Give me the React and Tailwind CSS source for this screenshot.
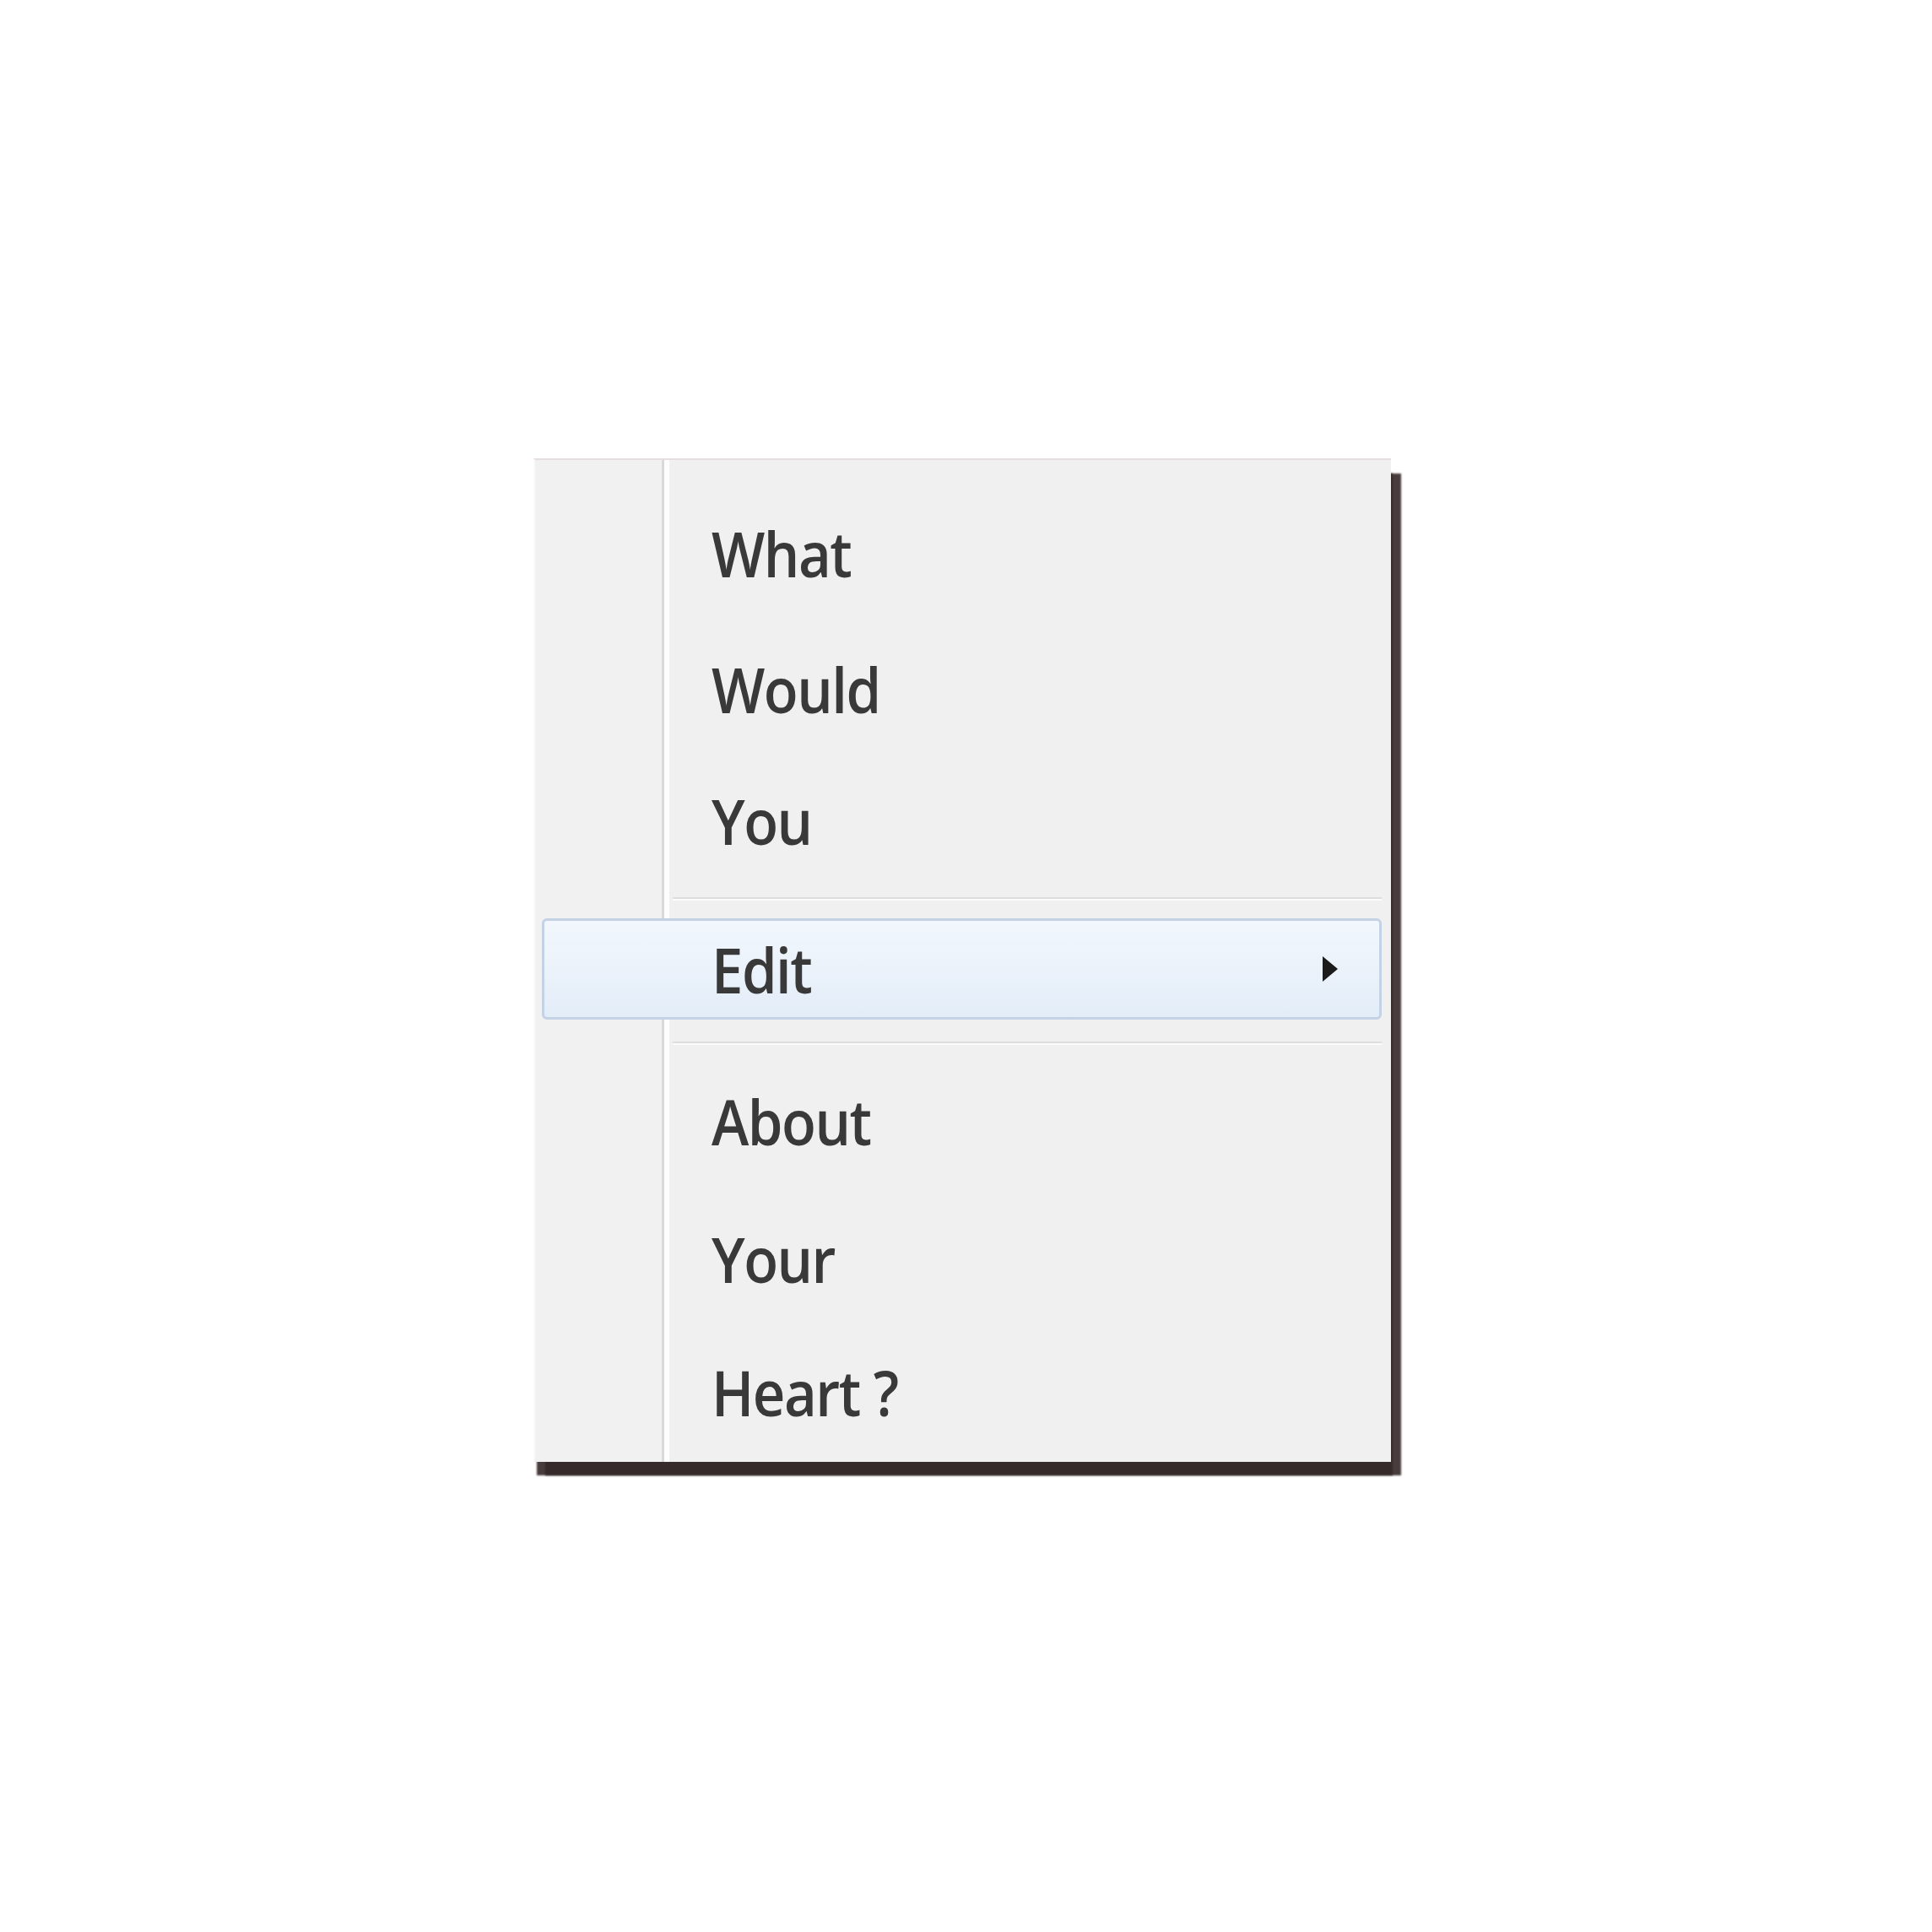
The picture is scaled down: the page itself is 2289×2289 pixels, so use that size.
import React from 'react'

// Plain menu row
function Item({ label, h }) {
  return (
    <div className={`${h} flex items-center pl-[209px]`}>
      <span className="inline-block origin-center scale-y-[1.12] text-[67px] font-semibold tracking-[-1.5px] leading-none text-[#393939] font-['Open_Sans',sans-serif]">
        {label}
      </span>
    </div>
  )
}

// Thin separator with a white highlight under it
function Separator({ top }) {
  return (
    <div className={top}>
      <div className="ml-[163px] mr-[11px] h-[4px] border-t-2 border-t-[#dedede] border-b-2 border-b-[#fbfbfb]" />
    </div>
  )
}

export default function App() {
  return (
    <div className="min-h-screen w-full bg-white">
      <div className="pl-[632px] pt-[543px] pb-[520px]">
        <div className="w-[1016px] border-t-2 border-t-[#e9dcdc] border-l-2 border-l-[#fafafa] bg-[#f0f0f0] bg-[image:linear-gradient(to_right,#f1f1f1_0,#f1f1f1_150px,#d9d9d9_150px,#d9d9d9_153px,#fdfdfd_153px,#fdfdfd_159px,#f0f0f0_159px)] pt-[29px] pb-[9px] shadow-[13px_17px_2px_-1px_rgba(52,40,40,0.9),3px_17px_2px_-1px_rgba(52,40,40,0.9)]">
          <Item label="What" h="h-[162px]" />
          <Item label="Would" h="h-[160px]" />
          <Item label="You" h="h-[152px]" />

          <Separator top="h-[40px] pt-[15px]" />

          {/* highlighted submenu row */}
          <div className="h-[120px] ml-[8px] mr-[11px] flex items-center justify-between pl-[198px] pr-[47px] rounded-[6px] border-[3px] border-[#c3d3e5] bg-[image:linear-gradient(to_bottom,#f2f7fd,#e3edf8)]">
            <span className="inline-block origin-center scale-y-[1.12] text-[67px] font-semibold tracking-[-1.5px] leading-none text-[#393939] font-['Open_Sans',sans-serif]">
              Edit
            </span>
            <svg width="22" height="34" viewBox="0 0 22 34" className="block">
              <path d="M2 2 L20 17 L2 32 Z" fill="#1b1b1b" />
            </svg>
          </div>

          <Separator top="h-[41px] pt-[26px]" />

          <Item label="About" h="h-[158px]" />
          <Item label="Your" h="h-[168px]" />
          <Item label="Heart ?" h="h-[148px]" />
        </div>
      </div>
    </div>
  )
}
